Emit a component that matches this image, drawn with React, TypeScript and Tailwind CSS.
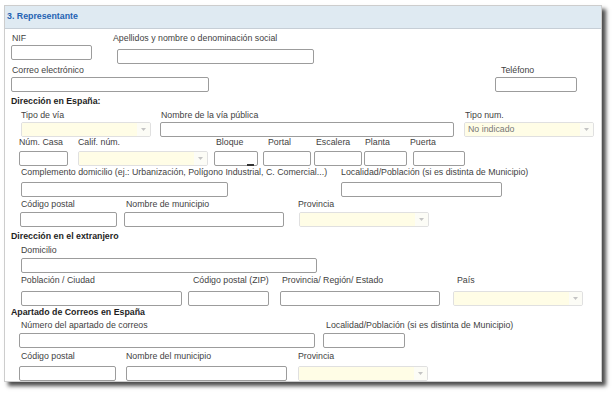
import React from "react"

/**
 * Representante — section 3 of the form, drawn as a framed panel with
 * blue title bar and rows of small labelled inputs / combos.
 */

type FieldProps = {
  label: string
  ml: string
  w: string
  lo?: string
  mt: string
  select?: boolean
  value?: string
  mark?: boolean
}

function Arrow() {
  return (
    <svg width="5" height="3" viewBox="0 0 5 3">
      <path d="M0 0h5L2.5 3z" fill="#c4c4c4" />
    </svg>
  )
}

function Field({ label, ml, w, lo = "", mt, select, value, mark }: FieldProps) {
  return (
    <div className={`${ml} ${w} shrink-0 flex flex-col`}>
      <span className={`${lo} block h-[11px] leading-[11px] whitespace-nowrap text-[8.8px] text-[#3f3f3f]`}>
        {label}
      </span>
      {select ? (
        <div className={`${mt} h-[15px] w-full flex rounded-[2px] border border-[#e0e0e0] overflow-hidden`}>
          <div className="flex-1 bg-[#fffde6] pl-[3px] text-[8.8px] leading-[13px] text-[#777]">{value}</div>
          <div className="w-[13px] bg-[#fcfcf6] flex items-center justify-center">
            <Arrow />
          </div>
        </div>
      ) : (
        <div className={`${mt} relative h-[15px] w-full rounded-[2px] border border-[#9c9c9c] bg-white`}>
          {mark && <div className="absolute right-[3px] bottom-[-1px] h-[2px] w-[7px] bg-[#333]" />}
        </div>
      )}
    </div>
  )
}

function Heading({ children, mt }: { children: React.ReactNode; mt: string }) {
  return (
    <div className={`${mt} ml-[6px] h-[11px] leading-[11px] text-[8.8px] font-bold text-[#1e1e1e] whitespace-nowrap`}>
      {children}
    </div>
  )
}

export default function App() {
  return (
    <div
      className="w-[613px] h-[396px] bg-white pt-[5px] pl-[4px] overflow-hidden"
      style={{ fontFamily: '"Liberation Sans", Arial, sans-serif' }}
    >
      <div className="w-[598px] h-[377px] bg-white border border-[#cdcdcd] overflow-hidden shadow-[4px_4px_4px_rgba(0,0,0,0.7)]">
        {/* Title bar */}
        <div className="h-[23px] bg-[#dfeaf2] border-b border-[#c6ced6] flex items-center pl-[2px]">
          <span className="text-[8.8px] font-bold text-[#1f63b3]">3. Representante</span>
        </div>

        {/* NIF / nombre */}
        <div className="mt-[4px] flex items-start">
          <Field label="NIF" ml="ml-[6px]" w="w-[81px]" lo="pl-[1px]" mt="mt-[1px]" />
          <Field label="Apellidos y nombre o denominación social" ml="ml-[25px]" w="w-[197px]" lo="-ml-[4px]" mt="mt-[5px]" />
        </div>

        <div className="mt-[1px] flex items-start">
          <Field label="Correo electrónico" ml="ml-[6px]" w="w-[198px]" lo="pl-[1px]" mt="mt-[1px]" />
          <Field label="Teléfono" ml="ml-[286px]" w="w-[82px]" lo="pl-[6px]" mt="mt-[1px]" />
        </div>

        {/* Dirección en España */}
        <Heading mt="mt-[4px]">Dirección en España:</Heading>

        <div className="mt-[3px] flex items-start">
          <Field label="Tipo de vía" ml="ml-[16px]" w="w-[130px]" mt="mt-[1px]" select />
          <Field label="Nombre de la vía pública" ml="ml-[9px]" w="w-[294px]" lo="pl-[1px]" mt="mt-[1px]" />
          <Field label="Tipo num." ml="ml-[10px]" w="w-[130px]" lo="pl-[1px]" mt="mt-[1px]" select value="No indicado" />
        </div>

        <div className="mt-0 flex items-start">
          <Field label="Núm. Casa" ml="ml-[14px]" w="w-[49px]" mt="mt-[3px]" />
          <Field label="Calif. núm." ml="ml-[10px]" w="w-[130px]" mt="mt-[3px]" select />
          <Field label="Bloque" ml="ml-[6px]" w="w-[44px]" lo="pl-[2px]" mt="mt-[3px]" mark />
          <Field label="Portal" ml="ml-[5px]" w="w-[48px]" lo="pl-[5px]" mt="mt-[3px]" />
          <Field label="Escalera" ml="ml-[3px]" w="w-[48px]" lo="pl-[2px]" mt="mt-[3px]" />
          <Field label="Planta" ml="ml-[2px]" w="w-[43px]" lo="pl-[1px]" mt="mt-[3px]" />
          <Field label="Puerta" ml="ml-[6px]" w="w-[52px]" lo="-ml-[3px]" mt="mt-[3px]" />
        </div>

        <div className="mt-[1px] flex items-start">
          <Field
            label="Complemento domicilio (ej.: Urbanización, Polígono Industrial, C. Comercial...)"
            ml="ml-[16px]"
            w="w-[207px]"
            mt="mt-[4px]"
          />
          <Field label="Localidad/Población (si es distinta de Municipio)" ml="ml-[113px]" w="w-[161px]" mt="mt-[4px]" />
        </div>

        <div className="mt-[2px] flex items-start">
          <Field label="Código postal" ml="ml-[15px]" w="w-[97px]" lo="pl-[1px]" mt="mt-[2px]" />
          <Field label="Nombre de municipio" ml="ml-[7px]" w="w-[160px]" lo="pl-[2px]" mt="mt-[2px]" />
          <Field label="Provincia" ml="ml-[15px]" w="w-[130px]" lo="-ml-[1px]" mt="mt-[2px]" select />
        </div>

        {/* Dirección en el extranjero */}
        <Heading mt="mt-[4px]">Dirección en el extranjero</Heading>

        <div className="mt-[3px] flex items-start">
          <Field label="Domicilio" ml="ml-[16px]" w="w-[296px]" mt="mt-[2px]" />
        </div>

        <div className="mt-[2px] flex items-start">
          <Field label="Población / Ciudad" ml="ml-[16px]" w="w-[161px]" mt="mt-[5px]" />
          <Field label="Código postal (ZIP)" ml="ml-[6px]" w="w-[81px]" lo="pl-[5px]" mt="mt-[5px]" />
          <Field label="Provincia/ Región/ Estado" ml="ml-[11px]" w="w-[160px]" lo="pl-[2px]" mt="mt-[5px]" />
          <Field label="País" ml="ml-[13px]" w="w-[130px]" lo="pl-[4px]" mt="mt-[5px]" select />
        </div>

        {/* Apartado de correos */}
        <Heading mt="mt-[1px]">Apartado de Correos en España</Heading>

        <div className="mt-[2px] flex items-start">
          <Field label="Número del apartado de correos" ml="ml-[14px]" w="w-[296px]" lo="pl-[2px]" mt="mt-[2px]" />
          <Field label="Localidad/Población (si es distinta de Municipio)" ml="ml-[8px]" w="w-[82px]" lo="pl-[3px]" mt="mt-[2px]" />
        </div>

        <div className="mt-[3px] flex items-start">
          <Field label="Código postal" ml="ml-[14px]" w="w-[97px]" lo="pl-[2px]" mt="mt-[4px]" />
          <Field label="Nombre del municipio" ml="ml-[10px]" w="w-[161px]" mt="mt-[4px]" />
          <Field label="Provincia" ml="ml-[11px]" w="w-[130px]" mt="mt-[4px]" select />
        </div>
      </div>
    </div>
  )
}
